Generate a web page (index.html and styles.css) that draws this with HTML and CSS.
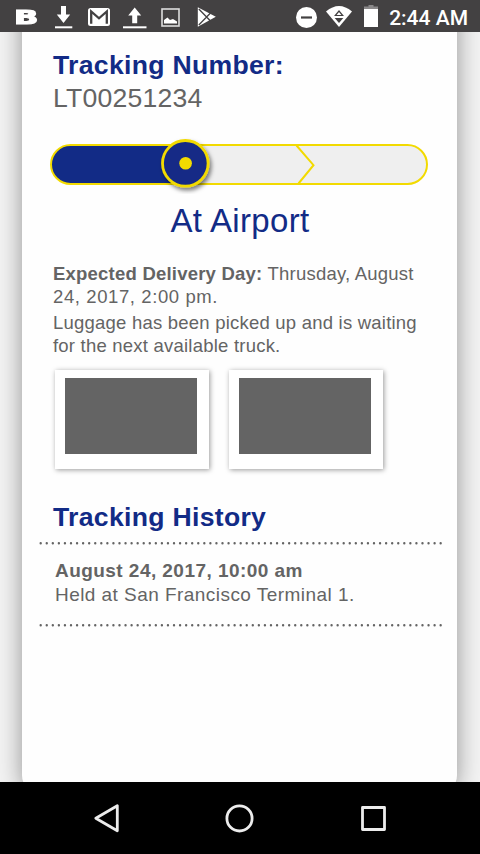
FILE: index.html
```html
<!DOCTYPE html>
<html lang="en">
<head>
<meta charset="utf-8">
<title>Tracking</title>
<link rel="stylesheet" href="styles.css">
</head>
<body>
<div class="phone">
  <header class="status">
    <div class="status-left">
      <span class="brand"><span class="brand-letter">B</span></span>
      <svg class="ic-download" width="18" height="24" viewBox="0 0 18 24"><path d="M6 1h5v8.500h4.200L8.500 18 1.800 9.500H6z" fill="#fff"/><path d="M0 21.300h17.300v2H0z" fill="#fff"/></svg>
      <svg class="ic-mail" width="22" height="18" viewBox="0 0 22 18"><rect width="22" height="18" rx="2.500" fill="#fff"/><path d="M3.200 15.800V3.500L11 10.300l7.800-6.800v12.300" fill="none" stroke="#434142" stroke-width="2.300"/><path d="M5 2h12l-6 4.800z" fill="#fff"/></svg>
      <svg class="ic-upload" width="24" height="24" viewBox="0 0 24 24"><path d="M9.200 18.300h5V10.500h4L11.700 2.500 5.200 10.500h4z" fill="#fff"/><path d="M0 21.300h23.500v2H0z" fill="#fff"/></svg>
      <svg class="ic-image" width="19" height="19" viewBox="0 0 19 19"><rect x="1" y="1" width="17" height="17" fill="none" stroke="#dcdcdc" stroke-width="1.600"/><path d="M3 15.500v-3.500l3.500-2.500L9 12l3-1 4 2.500v2z" fill="#fff"/></svg>
      <svg class="ic-play" width="20" height="20" viewBox="0 0 20 20"><path d="M.8.300 18.800 9.800.8 19.700z" fill="#fff"/><path d="M1.800 2 13.500 14M1.800 18 13.500 6" stroke="#434142" stroke-width="1.300"/></svg>
    </div>
    <div class="status-right">
      <svg width="21" height="21" viewBox="0 0 21 21"><circle cx="10.500" cy="10.500" r="10.500" fill="#fff"/><path d="M5 10.500h11" stroke="#434142" stroke-width="2.200"/></svg>
      <svg class="ic-wifi" width="26" height="21" viewBox="0 0 26 21"><path d="M0 5.500Q13-5.500 26 5.500L13 21z" fill="#fff"/><path d="M9.300 9.500 13 5l3.700 4.500z" fill="#fff" stroke="#434142" stroke-width="1.200"/><path d="M8.700 12h8.600L13 17z" fill="#434142"/></svg>
      <svg class="ic-battery" width="14" height="22" viewBox="0 0 14 22"><path d="M4.500 0h5v1.500H14V5H0V1.500h4.500z" fill="#8a8889"/><path d="M0 4h14v18H0z" fill="#fff"/></svg>
      <span class="clock">2:44 AM</span>
    </div>
  </header>

  <main class="screen">
    <article class="card">
      <h1 class="heading">Tracking Number:</h1>
      <p class="number">LT00251234</p>

      <svg class="progress" width="388" height="60" viewBox="45 134 388 60">
        <defs>
          <filter id="knob-shadow" x="-30%" y="-30%" width="170%" height="170%"><feDropShadow dx="2" dy="3" stdDeviation="2" flood-color="#000" flood-opacity=".5"/></filter>
        </defs>
        <rect x="51" y="145" width="376" height="39" rx="19.500" fill="#efefef"/>
        <path d="M186 145H70.500a19.500 19.500 0 0 0 0 39H186z" fill="#122b86"/>
        <rect x="51" y="145" width="376" height="39" rx="19.500" fill="none" stroke="#f2da00" stroke-width="2"/>
        <path d="M296.500 145.500 313.500 165.200 298.500 183.500" fill="none" stroke="#f2da00" stroke-width="2"/>
        <circle cx="185.300" cy="163.300" r="22.800" fill="#122b86" stroke="#f2da00" stroke-width="2.800" filter="url(#knob-shadow)"/>
        <circle cx="185.600" cy="163.200" r="6.300" fill="#f2da00"/>
      </svg>

      <h2 class="stage">At Airport</h2>

      <div class="details">
        <p><b>Expected Delivery Day:</b> Thrusday, August<br><span class="delivery-time">24, 2017, 2:00 pm.</span></p>
        <p>Luggage has been picked up and is waiting<br>for the next available truck.</p>
      </div>

      <div class="photos">
        <div class="photo"><div class="photo-image"></div></div>
        <div class="photo"><div class="photo-image"></div></div>
      </div>

      <h2 class="heading">Tracking History</h2>
      <section class="history">
        <svg class="dots" width="404" height="4" viewBox="0 0 404 4"><path d="M1.700 2.300H402"/></svg>
        <div class="entry">
          <p class="entry-date">August 24, 2017, 10:00 am</p>
          <p class="entry-text">Held at San Francisco Terminal 1.</p>
        </div>
        <svg class="dots" width="404" height="4" viewBox="0 0 404 4"><path d="M1.700 2.300H402"/></svg>
      </section>
    </article>
  </main>

  <nav class="navbar">
    <svg width="28" height="30" viewBox="0 0 28 30"><path d="M24.300 2.800v25L2.800 15.300z" fill="none" stroke="#ececec" stroke-width="2.800" stroke-linejoin="round"/></svg>
    <svg width="30" height="30" viewBox="0 0 30 30"><circle cx="14.500" cy="15.400" r="12.600" fill="none" stroke="#ececec" stroke-width="2.800"/></svg>
    <svg width="28" height="30" viewBox="0 0 28 30"><rect x="3.500" y="4.500" width="22" height="22" fill="none" stroke="#ececec" stroke-width="2.800" stroke-linejoin="round"/></svg>
  </nav>
</div>
</body>
</html>
```
FILE: styles.css
```css
* { box-sizing: border-box; }
body, h1, h2, p { margin: 0; }
body { font-family: "Liberation Sans", Arial, sans-serif; }
svg { display: block; flex: none; }

.phone {
  width: 480px;
  height: 854px;
  display: flex;
  flex-direction: column;
  overflow: hidden;
}

.status {
  height: 32px;
  flex: none;
  display: flex;
  justify-content: space-between;
  padding: 0 12px 0 16px;
  background: #434142;
}
.status-left, .status-right { display: flex; align-items: flex-start; }
.status-right { padding-top: 7px; }
.brand { width: 24px; height: 32px; }
.brand-letter {
  display: block;
  width: 16px;
  transform: scaleX(1.6);
  transform-origin: 0 0;
  margin-left: -2px;
  color: #fff;
  font: bold 20px/34px "DejaVu Sans", sans-serif;
  -webkit-text-stroke: 1.2px #fff;
}
.ic-download { margin: 5px 0 0 15px; }
.ic-mail { margin: 8px 0 0 15px; }
.ic-upload { margin: 5px 0 0 13px; }
.ic-image { margin: 8px 0 0 14px; }
.ic-play { margin: 7px 0 0 17px; }
.ic-wifi { margin: -1px 0 0 9px; }
.ic-battery { margin: -2px 11px 0 12px; }
.clock {
  color: #fff;
  font: 500 21px/22px Roboto, sans-serif;
  white-space: nowrap;
}

.screen {
  height: 750px;
  flex: none;
  overflow: hidden;
  background: #f3f3f3;
}
.card {
  width: 435px;
  height: 803px;
  margin: -40px 0 0 22px;
  padding: 57px 16px 0 31px;
  border-radius: 20px;
  background: #fefefe;
  box-shadow: 0 0 24px rgba(0, 0, 0, .4);
  color: #646464;
}
.heading {
  color: #122b86;
  font-size: 26.6px;
  line-height: 32px;
  letter-spacing: .3px;
}
.number { font-size: 26.6px; line-height: 33px; letter-spacing: .2px; padding-top: 1px; }
.progress { margin: 19px 0 0 -8px; }
.stage {
  width: 374px;
  margin-top: 8px;
  color: #122b86;
  font-size: 33px;
  font-weight: 400;
  line-height: 37px;
  letter-spacing: .35px;
  text-align: center;
}
.details {
  display: flex;
  flex-direction: column;
  gap: 3px;
  margin-top: 23px;
  font-size: 18.5px;
  line-height: 23px;
  letter-spacing: .22px;
  white-space: nowrap;
}
.delivery-time { letter-spacing: .6px; }
.photos { display: flex; gap: 20px; margin: 13px 0 32px 2px; }
.photo {
  width: 154px;
  height: 99px;
  padding: 8px 10px;
  background: #fff;
  box-shadow: 1px 1px 5px rgba(0, 0, 0, .4);
}
.photo-image { width: 132px; height: 76px; background: #646464; }

.history { margin: 8px 0 0 -14px; }
.dots path {
  stroke: #646464;
  stroke-width: 2.4;
  stroke-linecap: round;
  stroke-dasharray: 0 6.06;
}
.entry {
  padding: 14px 0 16px 16px;
  font-size: 19px;
  line-height: 24px;
  letter-spacing: .45px;
}
.entry-date { font-weight: 700; }

.navbar {
  height: 72px;
  flex: none;
  display: flex;
  justify-content: space-between;
  padding: 21px 93px 0 93px;
  background: #000;
}
```
